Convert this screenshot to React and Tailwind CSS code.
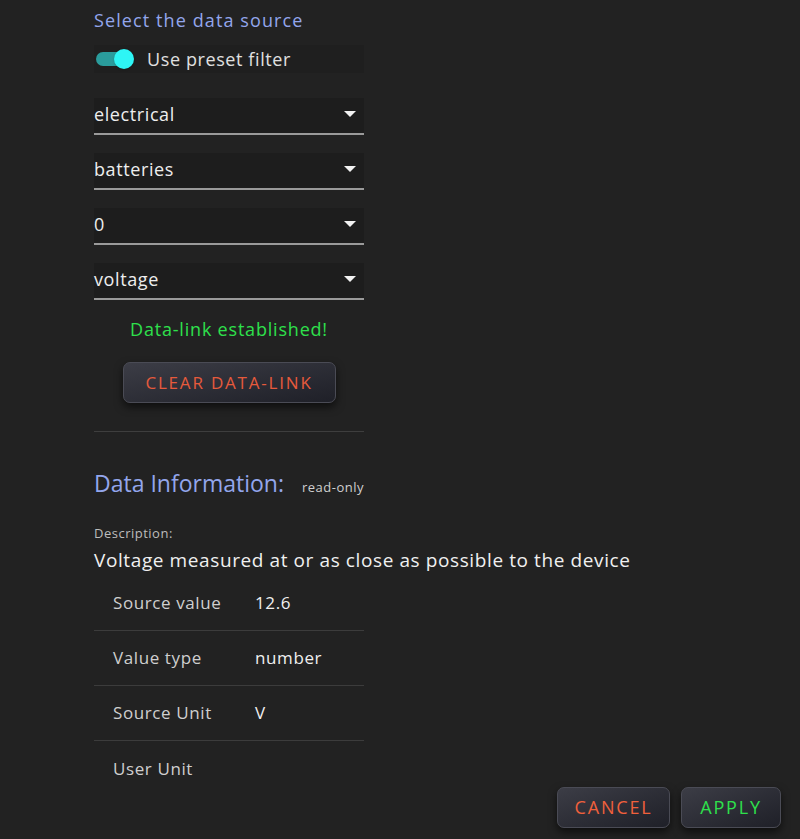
import React from "react";

const font = { fontFamily: '"Open Sans", "Liberation Sans", sans-serif' };

function Caret() {
  return (
    <svg width="12" height="7" viewBox="0 0 12 7" className="shrink-0">
      <path d="M0 0 L12 0 L6 6 Z" fill="#f2f2f2" />
    </svg>
  );
}

function SelectField({ value }) {
  return (
    <div className="flex h-[37px] items-center justify-between border-b-2 border-[#9a9a9a] bg-[#1d1d1d] pb-[3px] pr-2">
      <span className="text-[18px] tracking-[0.6px] text-[#eeeeee]">{value}</span>
      <Caret />
    </div>
  );
}

function InfoRow({ label, value, last }) {
  return (
    <div className={`flex h-[55px] items-center ${last ? "" : "border-b border-[#3c3c3c]"}`}>
      <span className="w-[161px] pl-[19px] text-[17px] tracking-[0.6px] text-[#cfcfcf]">{label}</span>
      <span className="text-[17px] tracking-[0.6px] text-[#f0f0f0]">{value}</span>
    </div>
  );
}

export default function App() {
  return (
    <div className="relative h-[839px] w-[800px] overflow-hidden bg-[#222222]" style={font}>
      <div className="ml-[94px] flex w-[270px] flex-col">
        <h2 className="mt-[7px] whitespace-nowrap text-[18px] leading-[26px] tracking-[1.1px] text-[#93a6ec]">
          Select the data source
        </h2>

        <div className="mt-[12px] flex h-[28px] items-center bg-[#1f1f1f]">
          <div className="relative ml-[2px] h-[14px] w-[36px] rounded-full bg-[#2a9c9c]">
            <div className="absolute -top-[3px] right-[-2px] h-[20px] w-[20px] rounded-full bg-[#2ef5f5] shadow" />
          </div>
          <span className="ml-[15px] text-[18px] tracking-[0.6px] text-[#e0e0e0]">Use preset filter</span>
        </div>

        <div className="mt-[25px] flex flex-col gap-[18px]">
          <SelectField value="electrical" />
          <SelectField value="batteries" />
          <SelectField value="0" />
          <SelectField value="voltage" />
        </div>

        <p className="mt-[16px] text-center text-[18px] tracking-[0.8px] text-[#2ee04c]">Data-link established!</p>

        <div className="mt-[19px] flex justify-center">
          <button className="h-[41px] w-[213px] rounded-[7px] border border-[#4a4b55] bg-gradient-to-br from-[#3c3d46] to-[#1f2028] text-[17px] tracking-[1.8px] text-[#e65a3c] shadow-[0_4px_8px_rgba(0,0,0,0.6)]">
            CLEAR DATA-LINK
          </button>
        </div>

        <div className="mt-[28px] border-t border-[#3e3e3e]" />
      </div>

      <div className="ml-[94px] mt-[36px] flex items-baseline whitespace-nowrap">
        <h2 className="text-[23px] leading-[30px] text-[#93a6ec]">Data Information:</h2>
        <span className="ml-[18px] text-[13px] tracking-[0.5px] text-[#d0d0d0]">read-only</span>
      </div>

      <div className="ml-[94px] mt-[26px] text-[13px] tracking-[0.5px] text-[#bdbdbd]">Description:</div>
      <div className="ml-[94px] mt-[2px] whitespace-nowrap text-[19px] tracking-[0.6px] text-[#f0f0f0]">
        Voltage measured at or as close as possible to the device
      </div>

      <div className="ml-[94px] mt-[2px] flex w-[270px] flex-col">
        <InfoRow label="Source value" value="12.6" />
        <InfoRow label="Value type" value="number" />
        <InfoRow label="Source Unit" value="V" />
        <InfoRow label="User Unit" value="" last />
      </div>

      <div className="absolute bottom-[11px] right-[19px] flex gap-[11px]">
        <button className="h-[41px] w-[113px] rounded-[7px] border border-[#4a4b55] bg-gradient-to-br from-[#3c3d46] to-[#1f2028] text-[18px] tracking-[1.8px] text-[#f0603c] shadow-[0_4px_8px_rgba(0,0,0,0.6)]">
          CANCEL
        </button>
        <button className="h-[41px] w-[100px] rounded-[7px] border border-[#4a4b55] bg-gradient-to-br from-[#3c3d46] to-[#1f2028] text-[18px] tracking-[1.8px] text-[#2ee04c] shadow-[0_4px_8px_rgba(0,0,0,0.6)]">
          APPLY
        </button>
      </div>
    </div>
  );
}
